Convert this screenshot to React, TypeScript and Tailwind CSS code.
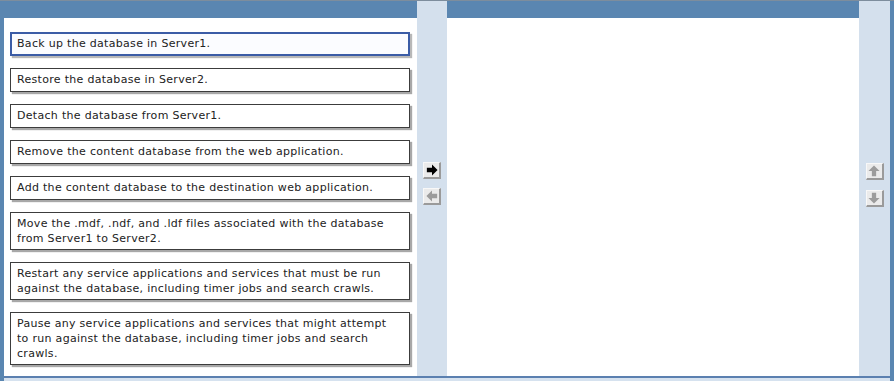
import React from "react";

const items: string[] = [
  "Back up the database in Server1.",
  "Restore the database in Server2.",
  "Detach the database from Server1.",
  "Remove the content database from the web application.",
  "Add the content database to the destination web application.",
  "Move the .mdf, .ndf, and .ldf files associated with the database from Server1 to Server2.",
  "Restart any service applications and services that must be run against the database, including timer jobs and search crawls.",
  "Pause any service applications and services that might attempt to run against the database, including timer jobs and search crawls.",
];

function Btn({ dir, active }: { dir: "right" | "left" | "up" | "down"; active?: boolean }) {
  const d =
    dir === "right"
      ? "M1 4.5 H7 V0.5 L13.5 7 L7 13.5 V9.5 H1 Z"
      : dir === "left"
      ? "M13 4.5 H7 V0.5 L0.5 7 L7 13.5 V9.5 H13 Z"
      : dir === "up"
      ? "M7 0.5 L13.5 7 H9.5 V13 H4.5 V7 H0.5 Z"
      : "M7 13.5 L13.5 7 H9.5 V1 H4.5 V7 H0.5 Z";
  return (
    <div className="w-[18px] h-[17px] bg-[#ebebeb] border-t border-l border-t-[#f8f8f8] border-l-[#f8f8f8] border-b-2 border-r-2 border-b-[#9a9a9a] border-r-[#9a9a9a] flex items-center justify-center">
      <svg width="12" height="12" viewBox="0 0 14 14">
        <path d={d} fill={active ? "#000000" : "#9c9c9c"} />
      </svg>
    </div>
  );
}

export default function App() {
  return (
    <div className="w-[894px] h-[381px] flex bg-[#d4e0ed] overflow-hidden" style={{ fontFamily: "'DejaVu Sans', Verdana, sans-serif" }}>
      <div className="w-[4px] h-full bg-[#5a86b1] border-t border-[#7d8d9d]" />
      <div className="w-[886px] h-full flex flex-col">
        <div className="flex h-[376px] border-t border-[#7d8d9d]">
          <div className="w-[413px] flex flex-col">
            <div className="h-[17px] bg-[#5a86b1]" />
            <div className="flex-1 bg-white pl-[6px] pt-[14px] flex flex-col gap-[12px]">
              {items.map((t, i) => (
                <div
                  key={i}
                  className={
                    i === 0
                      ? "w-[400px] min-h-[24px] border-2 border-[#3b5ca6] bg-[#fbfcff] pl-[5px] pr-[8px] py-[2px] text-[11px] leading-[15px] tracking-[0.3px] text-[#222] shadow-[2px_2px_1px_#b8b8b8]"
                      : "w-[400px] min-h-[24px] border border-[#3c3c3c] bg-white pl-[6px] pr-[8px] py-[3px] text-[11px] leading-[15px] tracking-[0.3px] text-[#222] shadow-[2px_2px_1px_#a8a8a8]"
                  }
                >
                  {t}
                </div>
              ))}
            </div>
          </div>
          <div className="w-[30px] bg-[#d4e0ed] flex flex-col items-center pt-[161px] gap-[9px]">
            <Btn dir="right" active />
            <Btn dir="left" />
          </div>
          <div className="w-[412px] flex flex-col">
            <div className="h-[17px] bg-[#5a86b1]" />
            <div className="flex-1 bg-white" />
          </div>
          <div className="w-[31px] bg-[#d4e0ed] flex flex-col items-center pt-[162px] gap-[10px]">
            <Btn dir="up" />
            <Btn dir="down" />
          </div>
        </div>
        <div className="h-[2px] bg-[#5b80b0]" />
        <div className="flex-1 bg-[#d6e2ef]" />
      </div>
      <div className="w-[4px] h-full bg-[#5a86b1] border-t border-[#7d8d9d]" />
    </div>
  );
}
